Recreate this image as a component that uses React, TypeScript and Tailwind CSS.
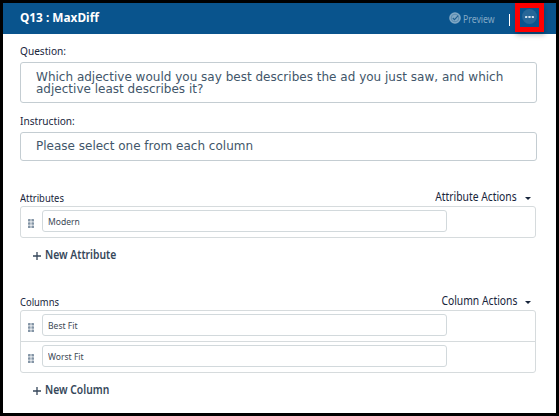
import type { ReactNode } from "react";

interface ListSectionProps {
  title: string;
  action: string;
  addLabel: string;
  items: string[];
}

function DragHandle() {
  return (
    <svg width="6" height="9" viewBox="0 0 6 9" className="mt-0.5 shrink-0" fill="#8394a5">
      {[0, 3.2, 6.4].map((y) => (
        <g key={y}>
          <rect x="0" y={y} width="2.6" height="2.6" rx="0.5" />
          <rect x="3.4" y={y} width="2.6" height="2.6" rx="0.5" />
        </g>
      ))}
    </svg>
  );
}

function PreviewIcon() {
  return (
    <svg width="12" height="12" viewBox="0 0 12 12" fill="none" className="mb-0.5 shrink-0">
      <circle cx="6" cy="6" r="5.8" fill="#81a8c5" />
      <circle cx="6" cy="6" r="3.8" stroke="#4f84ab" strokeWidth="0.8" />
      <path d="M3.8 6l1.7 1.7 3.7-4" stroke="#1f6091" strokeWidth="1.1" />
    </svg>
  );
}

function Header() {
  return (
    <header className="flex h-[31px] shrink-0 items-center bg-[#09548d] pl-[17px]">
      <h1 className="mb-1 w-[429px] origin-left scale-x-[0.91] text-[13px] leading-[18px] font-bold whitespace-nowrap text-white">
        Q13 : MaxDiff
      </h1>
      <div className="flex w-[60px] items-center gap-0.5 text-[#81a8c5]">
        <PreviewIcon />
        <span className="origin-left scale-x-[0.87] text-[10px] leading-4">Preview</span>
      </div>
      <div className="mt-[3px] mr-px h-3 w-px bg-white" />
      <div className="ml-1 flex h-[29px] w-[29px] items-center justify-center self-start border-[5px] border-[#fe0000] bg-[#09548d] shadow-[1px_3px_5px_rgba(0,0,0,0.25)]">
        <div className="mb-0.5 flex h-[15px] w-[15px] items-center justify-center rounded-full bg-[#276798]">
          <svg width="9" height="2" viewBox="0 0 9 2" fill="#d3e1ec">
            <rect width="2.3" height="2" rx="0.4" />
            <rect x="3.35" width="2.3" height="2" rx="0.4" />
            <rect x="6.7" width="2.3" height="2" rx="0.4" />
          </svg>
        </div>
      </div>
    </header>
  );
}

function TextBlock({ label, children, className }: { label: string; children: ReactNode; className: string }) {
  return (
    <section className="w-[517px]">
      <div className="h-[18px] origin-left scale-x-[0.88] text-[11.5px] leading-[14px] text-[#17243b]">{label}</div>
      <div
        className={`rounded-[3px] border border-[#c4cdd2] pl-[15px] font-['DejaVu_Sans',sans-serif] text-[12px] leading-3 whitespace-nowrap text-[#42566a] ${className}`}
      >
        {children}
      </div>
    </section>
  );
}

function ListSection({ title, action, addLabel, items }: ListSectionProps) {
  return (
    <section className="w-[516px]">
      <div className="flex h-4 items-start justify-between text-[#17243b]">
        <span className="origin-left scale-x-[0.94] text-[10px] leading-4">{title}</span>
        <button className="-mt-px flex items-center pr-[5px] text-[12px] leading-4 whitespace-nowrap">
          <span className="origin-right scale-x-[0.86]">{action}</span>
          <svg width="6" height="3" viewBox="0 0 6 3" className="mt-[3px] ml-2" fill="#17243b">
            <path d="M0 0h6L3 3z" />
          </svg>
        </button>
      </div>
      <div className="rounded-[3px] border border-[#d6dbdd]">
        {items.map((item) => (
          <div
            key={item}
            className="flex h-[31px] items-center border-t border-[#d6dbdd] pl-[7px] first:h-[30px] first:border-t-0"
          >
            <DragHandle />
            <div className="mb-0.5 ml-2 h-[22px] w-[405px] rounded-[3px] border border-[#d2d9dc] pt-px pl-[5px] text-[9.5px] leading-5 text-[#3c4855]">
              <span className="inline-block origin-left scale-x-[0.9]">{item}</span>
            </div>
          </div>
        ))}
      </div>
      <button className="mt-2 ml-[13px] flex h-[18px] items-center gap-1 text-[12px] leading-[18px] font-semibold whitespace-nowrap text-[#36475a]">
        <svg width="8" height="8" viewBox="0 0 8 8" stroke="#36475a" strokeWidth="1.3" className="mt-px">
          <path d="M4 0v8M0 4h8" />
        </svg>
        <span className="origin-left scale-x-[0.86]">{addLabel}</span>
      </button>
    </section>
  );
}

export default function App() {
  return (
    <div className="flex h-[416px] w-[559px] flex-col border-[3px] border-black bg-white font-['Noto_Sans',sans-serif]">
      <Header />
      <main className="flex flex-col pt-2.5 pl-[17px]">
        <TextBlock label="Question:" className="h-[41px] pt-2">
          <p className="tracking-[0.01px]">
            Which adjective would you say best describes the ad you just saw, and which
            <br />
            adjective least describes it?
          </p>
        </TextBlock>
        <div className="h-[11px]" />
        <TextBlock label="Instruction:" className="h-[29px] pt-[7px]">
          Please select one from each column
        </TextBlock>
        <div className="h-[29px]" />
        <ListSection
          title="Attributes"
          action="Attribute Actions"
          addLabel="New Attribute"
          items={["Modern"]}
        />
        <div className="h-[30px]" />
        <ListSection
          title="Columns"
          action="Column Actions"
          addLabel="New Column"
          items={["Best Fit", "Worst Fit"]}
        />
      </main>
    </div>
  );
}
